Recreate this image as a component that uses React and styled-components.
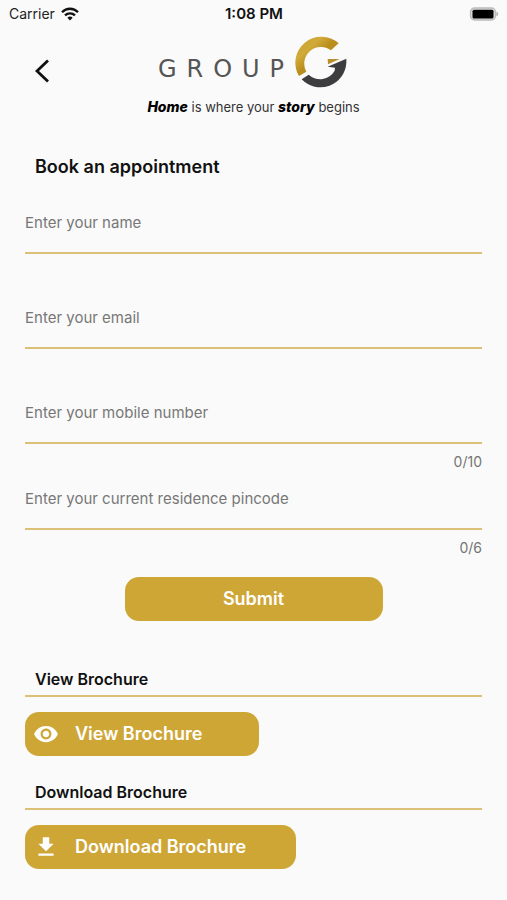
import React, { useState } from "react";
import styled, { createGlobalStyle } from "styled-components";
import { MdVisibility, MdGetApp } from "react-icons/md";

const GlobalStyle = createGlobalStyle`
  * { box-sizing: border-box; }
  body {
    margin: 0;
    background: #fafafa;
    color: #111;
    font-family: Inter, "Liberation Sans", sans-serif;
  }
`;

const gold = "#cea636";

const Screen = styled.div`
  min-height: 100vh;
  padding-bottom: 30px;
`;

const StatusBar = styled.div`
  display: grid;
  grid-template-columns: 1fr auto 1fr;
  align-items: center;
  height: 28px;
  padding: 0 8px 0 9px;
  font-size: 14px;
  line-height: 20px;
  color: #222;
`;

const Carrier = styled.div`
  display: flex;
  align-items: center;
  gap: 6px;
`;

const Clock = styled.div`
  font-size: 15px;
  font-weight: 600;
  color: #111;
`;

const Battery = styled.svg`
  justify-self: end;
`;

const Header = styled.header`
  display: grid;
  grid-template-columns: 64px 1fr 64px;
  align-items: end;
  padding: 8px 10px 0;
`;

const BackButton = styled.button`
  display: flex;
  justify-content: center;
  padding: 8px 0;
  border: 0;
  background: none;
  cursor: pointer;
`;

const Brand = styled.div`
  display: flex;
  justify-content: center;
  align-items: center;
`;

const Wordmark = styled.span`
  font-family: "DejaVu Sans", sans-serif;
  font-size: 24px;
  line-height: 28px;
  letter-spacing: 10px;
  color: #555;
  padding-top: 10px;
`;

const Tagline = styled.p`
  margin: 6px 0 0;
  text-align: center;
  font-size: 13px;
  line-height: 20px;
  color: #333;
`;

const Strong = styled.em`
  font-size: 14px;
  font-weight: 800;
  color: #000;
`;

const Content = styled.main`
  padding: 0 25px;
`;

const Title = styled.h1`
  margin: 38px 10px 0;
  font-size: 18px;
  line-height: 24px;
  font-weight: 600;
`;

const Form = styled.form`
  display: flex;
  flex-direction: column;
  padding-top: 20px;
`;

const Field = styled.div`
  display: flex;
  flex-direction: column;
  height: ${(p) => (p.$counted ? "86px" : "95px")};
`;

const TextInput = styled.input`
  width: 100%;
  height: 55px;
  padding: 0 0 6px;
  border: 0;
  border-bottom: 2px solid #dcc077;
  border-radius: 0;
  outline: 0;
  background: none;
  font: inherit;
  font-size: 15px;
  color: #222;
  &::placeholder { color: #777; opacity: 1; }
`;

const Counter = styled.span`
  align-self: flex-end;
  margin-top: 8px;
  font-size: 14px;
  line-height: 20px;
  color: #757575;
`;

const Button = styled.button`
  display: flex;
  align-items: center;
  height: 44px;
  border: 0;
  border-radius: 14px;
  background: ${gold};
  color: #fff;
  font: inherit;
  font-size: 18px;
  line-height: 24px;
  font-weight: 600;
  cursor: pointer;
`;

const SubmitButton = styled(Button)`
  align-self: center;
  justify-content: center;
  width: 258px;
  margin-top: 16px;
`;

const ActionButton = styled(Button)`
  gap: 16px;
  padding: 0 ${(p) => p.$endSpace}px 0 8px;
  margin-top: 15px;
`;

const Section = styled.section`
  margin-top: ${(p) => (p.$first ? "46px" : "24px")};
`;

const SectionTitle = styled.h2`
  margin: 0;
  padding: 0 10px 4px;
  border-bottom: 2px solid #dcc077;
  font-size: 16px;
  line-height: 24px;
  font-weight: 600;
`;

function WifiIcon() {
  return (
    <svg width="18" height="14" viewBox="0 0 18 14" aria-hidden="true" fill="none" stroke="#111" strokeWidth="2.3">
      <path d="M1 5.2C5.5 .6 12.5 .6 17 5.2" />
      <path d="M4 8.4C6.8 5.6 11.2 5.6 14 8.4" />
      <path d="M6.4 10.7C7.9 9.2 10.1 9.2 11.6 10.7L9 13.4Z" fill="#111" stroke="none" />
    </svg>
  );
}

function BatteryIcon() {
  return (
    <Battery width="30" height="14" viewBox="0 0 30 14" role="img" aria-label="Battery full">
      <rect x="1.5" y="1" width="25" height="12" rx="4" fill="#ddd" stroke="#bbb" strokeWidth="1.3" />
      <rect x="3.5" y="2.8" width="21" height="8.6" rx="1.5" fill="#000" />
      <path d="M27.5 4.5Q31 7 27.5 9.5Z" fill="#aaa" />
    </Battery>
  );
}

function LogoMark() {
  return (
    <svg width="55" height="55" viewBox="31 18 165 165" aria-hidden="true">
      <defs>
        <linearGradient id="goldFoil" x1="0" y1="0" x2="1" y2="1">
          <stop offset="0" stopColor="#c79d24" />
          <stop offset=".3" stopColor="#d0aa3a" />
          <stop offset=".5" stopColor="#b98d1c" />
          <stop offset="1" stopColor="#c49a2c" />
        </linearGradient>
      </defs>
      <path d="M165 40A78 78 0 0 0 46 138L68 125A50 50 0 0 1 142 61Z" fill="url(#goldFoil)" />
      <path d="M132 87H168L133 103Z" fill="#b98f2a" />
      <path d="M54 148L75 134A50 50 0 0 0 153 122L154 113L132 110L188 86V98A78 78 0 0 1 54 148Z" fill="#3d3d3f" />
    </svg>
  );
}

function CountedField({ label, type = "text", max }) {
  const [value, setValue] = useState("");
  return (
    <Field $counted={Boolean(max)}>
      <TextInput
        type={type}
        aria-label={label}
        placeholder={label}
        maxLength={max}
        value={value}
        onChange={(e) => setValue(e.target.value)}
      />
      {max && <Counter>{value.length}/{max}</Counter>}
    </Field>
  );
}

export default function App() {
  return (
    <Screen>
      <GlobalStyle />
      <StatusBar>
        <Carrier>Carrier <WifiIcon /></Carrier>
        <Clock>1:08 PM</Clock>
        <BatteryIcon />
      </StatusBar>
      <Header>
        <BackButton type="button" aria-label="Back">
          <svg width="16" height="24" viewBox="0 0 16 24" fill="none" stroke="#111" strokeWidth="2.8">
            <path d="M14 1.5L3 12L14 22.5" />
          </svg>
        </BackButton>
        <Brand>
          <Wordmark>GROUP</Wordmark>
          <LogoMark />
        </Brand>
      </Header>
      <Tagline>
        <Strong>Home</Strong> is where your <Strong>story</Strong> begins
      </Tagline>
      <Content>
        <Title>Book an appointment</Title>
        <Form onSubmit={(e) => e.preventDefault()}>
          <CountedField label="Enter your name" />
          <CountedField label="Enter your email" type="email" />
          <CountedField label="Enter your mobile number" type="tel" max={10} />
          <CountedField label="Enter your current residence pincode" max={6} />
          <SubmitButton type="submit">Submit</SubmitButton>
        </Form>
        <Section $first>
          <SectionTitle>View Brochure</SectionTitle>
          <ActionButton type="button" $endSpace={57}>
            <MdVisibility size={26} /> View Brochure
          </ActionButton>
        </Section>
        <Section>
          <SectionTitle>Download Brochure</SectionTitle>
          <ActionButton type="button" $endSpace={50}>
            <MdGetApp size={26} /> Download Brochure
          </ActionButton>
        </Section>
      </Content>
    </Screen>
  );
}
